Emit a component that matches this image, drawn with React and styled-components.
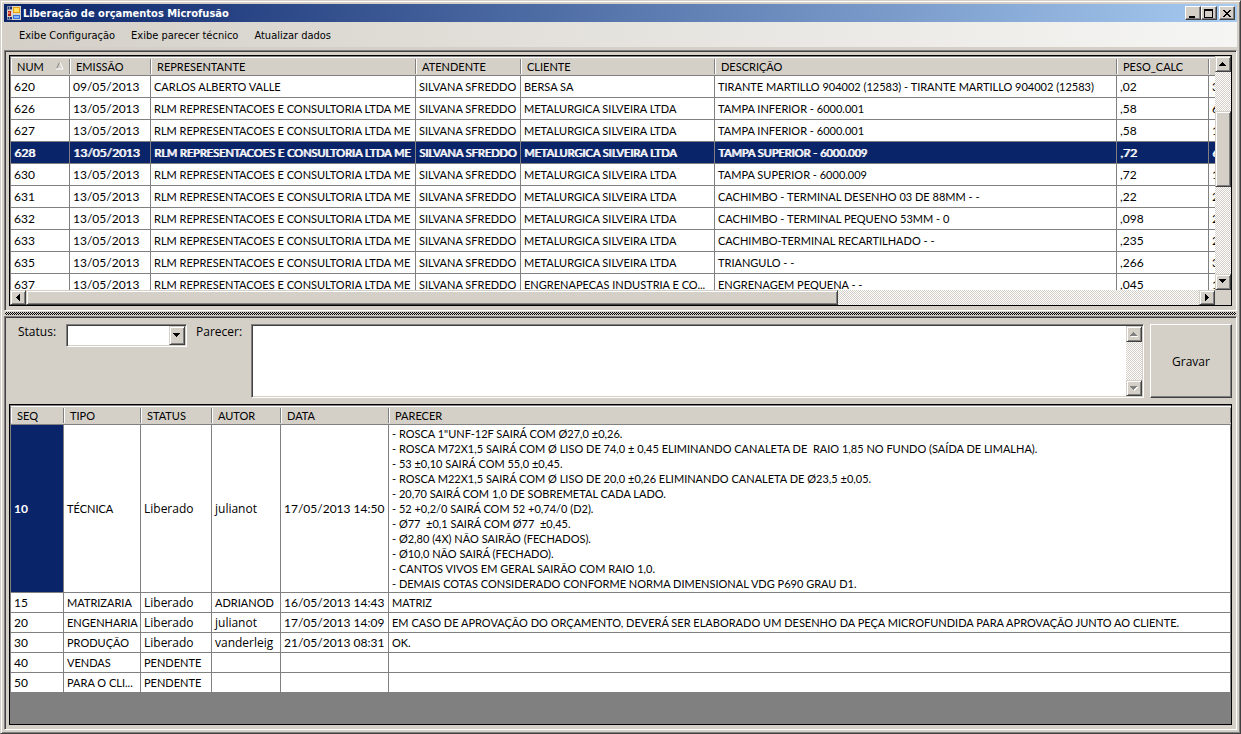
import React from 'react';
import styled, { createGlobalStyle, css } from 'styled-components';

const face = '#d4d0c8';
const line = '#808080';
const dark = '#404040';
const navy = '#0a246a';
const systemFont = '11px/15px "DejaVu Sans Condensed", "Noto Sans", sans-serif';
const formFont = '"Open Sans", "Noto Sans", sans-serif';

const GlobalStyle = createGlobalStyle`
  *, *::before, *::after { box-sizing: border-box; }
  body {
    margin: 0;
    background: ${face};
    color: #000;
    font: 11px/15px Lato, "Open Sans", sans-serif;
  }
  button, select, textarea { font: inherit; color: inherit; margin: 0; padding: 0; border-radius: 0; }
`;

const raised = css`
  background: ${face};
  border: 1px solid;
  border-color: ${face} ${dark} ${dark} ${face};
  box-shadow: inset 1px 1px #fff, inset -1px -1px ${line};
`;

const checker = css`
  background: repeating-conic-gradient(#fff 0 25%, ${face} 0 50%) 0 0 / 2px 2px;
`;

const Window = styled.div`
  display: flex;
  flex-direction: column;
  min-height: 100vh;
  padding: 3px;
  ${raised}
`;

const TitleBar = styled.header`
  display: flex;
  align-items: center;
  height: 18px;
  padding: 0 2px 0 3px;
  background: linear-gradient(90deg, ${navy}, #a6caf0);
`;

const Title = styled.h1`
  flex: 1;
  margin: 0 0 0 2px;
  color: #fff;
  font: ${systemFont};
  font-weight: bold;
`;

const CaptionButton = styled.button`
  display: grid;
  place-items: center;
  width: 16px;
  height: 14px;
  margin-left: ${(p) => (p.$apart ? '2px' : '0')};
  background: ${face};
  border: 1px solid;
  border-color: #fff ${dark} ${dark} #fff;
  box-shadow: inset -1px -1px ${line};
`;

const MenuBar = styled.nav`
  display: flex;
  align-items: center;
  gap: 16px;
  height: 25px;
  padding: 2px 15px 0;
  background: linear-gradient(90deg, ${face}, #f5f5f3);
`;

const MenuItem = styled.button`
  border: 0;
  background: none;
  font: ${systemFont};
`;

const Pane = styled.section`
  display: flex;
  flex-direction: column;
  flex: ${(p) => (p.$grow ? '1' : 'none')};
  padding: ${(p) => (p.$grow ? '7px 3px 4px' : '4px 3px')};
  border: 1px solid;
  border-color: ${line} #fff #fff ${line};
  box-shadow: inset 1px 1px ${dark};
`;

const UpperPane = styled(Pane)`
  margin-top: 3px;
`;

const Splitter = styled.div`
  height: 3px;
  margin: 1px;
  background: repeating-conic-gradient(#000 0 25%, ${face} 0 50%) 0 0 / 2px 2px;
`;

const Frame = styled.div`
  display: flex;
  flex-direction: column;
  flex: 1;
  margin: 0 1px;
  border: 1px solid #000;
  background: ${line};
`;

const Body = styled.div`
  display: flex;
`;

const Viewport = styled.div`
  flex: 1;
  min-width: 0;
  height: 234px;
  overflow: hidden;
`;

const Table = styled.table`
  width: 100%;
  min-width: ${(p) => (p.$wide ? '1280px' : '0')};
  table-layout: fixed;
  border-collapse: separate;
  border-spacing: 0;
  border-left: 1px solid ${line};
  border-top: 1px solid ${line};
`;

const HeadCell = styled.th`
  height: 19px;
  padding: 0 0 0 6px;
  background:
    linear-gradient(${line}, ${line}) right 2px / 1px 15px no-repeat,
    linear-gradient(#fff, #fff) left 2px / 1px 15px no-repeat,
    ${face};
  border-bottom: 1px solid ${line};
  box-shadow: inset 0 1px #fff;
  font-weight: normal;
  text-align: left;
  white-space: nowrap;
`;

const HeadLabel = styled.span`
  display: flex;
  align-items: center;
  justify-content: space-between;
  padding-right: 6px;
`;

const Row = styled.tr`
  height: ${(p) => p.$height};
  background: ${(p) => (p.$selected ? navy : '#fff')};
  color: ${(p) => (p.$selected ? '#fff' : '#000')};
  text-shadow: ${(p) => (p.$selected ? '1px 0 currentColor' : 'none')};
`;

const Cell = styled.td`
  padding: 1px 0 1px 3px;
  border-right: 1px solid ${line};
  border-bottom: 1px solid ${line};
  overflow: hidden;
  text-overflow: ellipsis;
  white-space: pre;
  font-size: ${(p) => (p.$figures ? '12px' : '11px')};
  ${(p) => p.$lower && css`font-family: ${formFont};`}
  ${(p) => p.$selected && css`
    background: ${navy};
    color: #fff;
    font-weight: bold;
  `}
`;

const Bar = styled.div`
  display: flex;
  flex-direction: ${(p) => (p.$vertical ? 'column' : 'row')};
  flex: ${(p) => (p.$vertical ? 'none' : '1')};
  width: ${(p) => (p.$vertical ? '16px' : 'auto')};
  ${checker}
`;

const ArrowButton = styled.button`
  display: grid;
  place-items: center;
  flex: none;
  width: 16px;
  height: 16px;
  ${raised}
`;

const Thumb = styled.div`
  flex: ${(p) => p.$share};
  ${raised}
`;

const Space = styled.div`
  flex: ${(p) => p.$share};
`;

const BottomBar = styled.div`
  display: flex;
  height: 15px;
  background: ${face};

  button { height: 15px; }
`;

const Corner = styled.div`
  width: 16px;
`;

const Form = styled.form`
  display: flex;
  align-items: flex-start;
  margin: 0 1px 6px 10px;
  font-family: ${formFont};
  font-size: 12px;
`;

const Label = styled.label`
  width: ${(p) => p.$width};
`;

const sunken = css`
  background: #fff;
  border: 1px solid;
  border-color: ${line} #fff #fff ${line};
  box-shadow: inset 1px 1px ${dark}, inset -1px -1px ${face};
`;

const Combo = styled.div`
  display: flex;
  width: 121px;
  height: 23px;
  margin-right: 9px;
  padding: 1px;
  ${sunken}
`;

const Select = styled.select`
  grid-area: 1 / 1;
  width: 100%;
  height: 100%;
  appearance: none;
  border: 0;
  background: transparent;
`;

const ComboArrow = styled.span`
  display: grid;
  place-items: center;
  grid-area: 1 / 1;
  justify-self: end;
  width: 16px;
  height: 100%;
  pointer-events: none;
  ${raised}
`;

const ComboInner = styled.div`
  display: grid;
  flex: 1;
`;

const Memo = styled.div`
  display: flex;
  flex: 1;
  height: 74px;
  margin-right: 6px;
  padding: 1px;
  ${sunken}
`;

const TextArea = styled.textarea`
  flex: 1;
  min-width: 0;
  margin: 1px;
  border: 0;
  outline: 0;
  resize: none;
  background: transparent;
`;

const SaveButton = styled.button`
  width: 82px;
  height: 74px;
  background: ${face};
  border: 1px solid;
  border-color: #fff ${dark} ${dark} #fff;
  box-shadow: inset -1px -1px ${line};
`;

const arrows = {
  up: 'M3 0h1v1h1v1h1v1h1v1H0V3h1V2h1V1h1z',
  down: 'M0 0h7v1H6v1H5v1H4v1H3V3H2V2H1V1H0z',
  left: 'M3 0h1v7H3V6H2V5H1V4H0V3h1V2h1V1h1z',
  right: 'M0 0h1v1h1v1h1v1h1v1H3v1H2v1H1v1H0z',
};

function Arrow({ dir, disabled }) {
  const tall = dir === 'left' || dir === 'right';
  return (
    <svg width={tall ? 5 : 8} height={tall ? 8 : 5} shapeRendering="crispEdges" aria-hidden="true">
      {disabled && <path d={arrows[dir]} fill="#fff" transform="translate(1 1)" />}
      <path d={arrows[dir]} fill={disabled ? line : '#000'} />
    </svg>
  );
}

function AppIcon() {
  return (
    <svg width="14" height="14" shapeRendering="crispEdges" aria-hidden="true">
      <path fill="#d8d4cc" d="M0 4h5v7H0zM5 0h9v14H5z" />
      <path fill="#8890a8" d="M0 0h5v4H0zM0 11h5v3H0z" />
      <path fill="#18307c" d="M1 1h1v2H1zM3 1h2v2H3zM1 11h1v2H1zM3 11h2v2H3z" />
      <path fill="#b82418" d="M1 5h3v5H1z" />
      <path fill="#f07050" d="M1 6h2v2H1z" />
      <path fill="#e8a010" d="M6 1h7v6H6z" />
      <path fill="#ffe060" d="M7 2h5v4H7z" />
      <path fill="#3870d8" d="M6 9h7v4H6z" />
      <path fill="#80b4ff" d="M7 10h5v2H7z" />
    </svg>
  );
}

const rlm = 'RLM REPRESENTACOES E CONSULTORIA LTDA ME';
const silveira = 'METALURGICA SILVEIRA LTDA';
const quotes = [
  ['620', '09/05/2013', 'CARLOS ALBERTO VALLE', 'BERSA SA', 'TIRANTE MARTILLO 904002 (12583) - TIRANTE MARTILLO 904002 (12583)', ',02', '3'],
  ['626', '13/05/2013', rlm, silveira, 'TAMPA INFERIOR - 6000.001', ',58', '6'],
  ['627', '13/05/2013', rlm, silveira, 'TAMPA INFERIOR - 6000.001', ',58', '1'],
  ['628', '13/05/2013', rlm, silveira, 'TAMPA SUPERIOR - 6000.009', ',72', '6'],
  ['630', '13/05/2013', rlm, silveira, 'TAMPA SUPERIOR - 6000.009', ',72', '1'],
  ['631', '13/05/2013', rlm, silveira, 'CACHIMBO - TERMINAL DESENHO 03 DE 88MM - -', ',22', '2'],
  ['632', '13/05/2013', rlm, silveira, 'CACHIMBO - TERMINAL PEQUENO 53MM - 0', ',098', '2'],
  ['633', '13/05/2013', rlm, silveira, 'CACHIMBO-TERMINAL RECARTILHADO - -', ',235', '2'],
  ['635', '13/05/2013', rlm, silveira, 'TRIANGULO - -', ',266', '3'],
  ['637', '13/05/2013', rlm, 'ENGRENAPECAS INDUSTRIA E CO...', 'ENGRENAGEM PEQUENA - -', ',045', '1'],
];

const technical = [
  '- ROSCA 1"UNF-12F SAIRÁ COM Ø27,0 ±0,26.',
  '- ROSCA M72X1,5 SAIRÁ COM Ø LISO DE 74,0 ± 0,45 ELIMINANDO CANALETA DE  RAIO 1,85 NO FUNDO (SAÍDA DE LIMALHA).',
  '- 53 ±0,10 SAIRÁ COM 55,0 ±0,45.',
  '- ROSCA M22X1,5 SAIRÁ COM Ø LISO DE 20,0 ±0,26 ELIMINANDO CANALETA DE Ø23,5 ±0,05.',
  '- 20,70 SAIRÁ COM 1,0 DE SOBREMETAL CADA LADO.',
  '- 52 +0,2/0 SAIRÁ COM 52 +0,74/0 (D2).',
  '- Ø77  ±0,1 SAIRÁ COM Ø77  ±0,45.',
  '- Ø2,80 (4X) NÃO SAIRÃO (FECHADOS).',
  '- Ø10,0 NÃO SAIRÁ (FECHADO).',
  '- CANTOS VIVOS EM GERAL SAIRÃO COM RAIO 1,0.',
  '- DEMAIS COTAS CONSIDERADO CONFORME NORMA DIMENSIONAL VDG P690 GRAU D1.',
].join('\n');

const reviews = [
  ['10', 'TÉCNICA', 'Liberado', 'julianot', '17/05/2013 14:50', technical],
  ['15', 'MATRIZARIA', 'Liberado', 'ADRIANOD', '16/05/2013 14:43', 'MATRIZ'],
  ['20', 'ENGENHARIA', 'Liberado', 'julianot', '17/05/2013 14:09', 'EM CASO DE APROVAÇÃO DO ORÇAMENTO, DEVERÁ SER ELABORADO UM DESENHO DA PEÇA MICROFUNDIDA PARA APROVAÇÃO JUNTO AO CLIENTE.'],
  ['30', 'PRODUÇÃO', 'Liberado', 'vanderleig', '21/05/2013 08:31', 'OK.'],
  ['40', 'VENDAS', 'PENDENTE', '', '', ''],
  ['50', 'PARA O CLI...', 'PENDENTE', '', '', ''],
];

const isCaps = (text) => text === text.toUpperCase() && /[A-Z]/.test(text);
const hasLower = (text) => /[a-z]/.test(text);

function Columns({ widths }) {
  return (
    <colgroup>
      {widths.map((width, i) => <col key={i} width={width} />)}
      <col />
    </colgroup>
  );
}

function QuotesTable() {
  return (
    <Table $wide>
      <Columns widths={[59, 81, 265, 105, 194, 402, 92]} />
      <thead>
        <tr>
          <HeadCell>
            <HeadLabel>
              NUM
              <svg width="8" height="8" aria-hidden="true">
                <path d="M3.5 .5L.5 6.5" stroke={line} fill="none" />
                <path d="M4 .5l3 6.5H0" stroke="#fff" fill="none" />
              </svg>
            </HeadLabel>
          </HeadCell>
          {['EMISSÃO', 'REPRESENTANTE', 'ATENDENTE', 'CLIENTE', 'DESCRIÇÃO', 'PESO_CALC', ''].map((name) => (
            <HeadCell key={name}>{name}</HeadCell>
          ))}
        </tr>
      </thead>
      <tbody>
        {quotes.map(([num, date, agent, client, description, weight, next]) => (
          <Row key={num} $height="22px" $selected={num === '628'}>
            <Cell $figures>{num}</Cell>
            <Cell $figures>{date}</Cell>
            <Cell>{agent}</Cell>
            <Cell>SILVANA SFREDDO</Cell>
            <Cell>{client}</Cell>
            <Cell>{description}</Cell>
            <Cell $figures>{weight}</Cell>
            <Cell $figures>{next}</Cell>
          </Row>
        ))}
      </tbody>
    </Table>
  );
}

function ReviewsTable() {
  return (
    <Table>
      <Columns widths={[53, 77, 71, 69, 108]} />
      <thead>
        <tr>
          {['SEQ', 'TIPO', 'STATUS', 'AUTOR', 'DATA', 'PARECER'].map((name) => (
            <HeadCell key={name}>{name}</HeadCell>
          ))}
        </tr>
      </thead>
      <tbody>
        {reviews.map((row) => (
          <Row key={row[0]} $height="20px">
            {row.map((text, i) => (
              <Cell
                key={i}
                $figures={i < 5 && !isCaps(text)}
                $lower={hasLower(text)}
                $selected={i === 0 && text === '10'}
              >
                {text}
              </Cell>
            ))}
          </Row>
        ))}
      </tbody>
    </Table>
  );
}

export default function App() {
  return (
    <>
      <GlobalStyle />
      <Window>
        <TitleBar>
          <AppIcon />
          <Title>Liberação de orçamentos Microfusão</Title>
          <CaptionButton aria-label="Minimizar">
            <svg width="10" height="9" shapeRendering="crispEdges"><path d="M1 7h6v2H1z" /></svg>
          </CaptionButton>
          <CaptionButton aria-label="Maximizar">
            <svg width="10" height="9" shapeRendering="crispEdges"><path fillRule="evenodd" d="M0 0h9v9H0zM1 2v6h7V2z" /></svg>
          </CaptionButton>
          <CaptionButton aria-label="Fechar" $apart>
            <svg width="8" height="7" shapeRendering="crispEdges">
              <path d="M0 0h2v1h1v1h2V1h1V0h2v1H7v1H6v1H5v1h1v1h1v1h1v1H6V6H5V5H3v1H2v1H0V6h1V5h1V4h1V3H2V2H1V1H0z" />
            </svg>
          </CaptionButton>
        </TitleBar>
        <MenuBar>
          <MenuItem>Exibe Configuração</MenuItem>
          <MenuItem>Exibe parecer técnico</MenuItem>
          <MenuItem>Atualizar dados</MenuItem>
        </MenuBar>
        <UpperPane>
          <Frame>
            <Body>
              <Viewport><QuotesTable /></Viewport>
              <Bar $vertical>
                <ArrowButton aria-label="Rolar para cima"><Arrow dir="up" /></ArrowButton>
                <Space $share={39} />
                <Thumb $share={75} />
                <Space $share={88} />
                <ArrowButton aria-label="Rolar para baixo"><Arrow dir="down" /></ArrowButton>
              </Bar>
            </Body>
            <BottomBar>
              <Bar>
                <ArrowButton aria-label="Rolar para a esquerda"><Arrow dir="left" /></ArrowButton>
                <Thumb $share={811} />
                <Space $share={362} />
                <ArrowButton aria-label="Rolar para a direita"><Arrow dir="right" /></ArrowButton>
              </Bar>
              <Corner />
            </BottomBar>
          </Frame>
        </UpperPane>
        <Splitter />
        <Pane $grow>
          <Form onSubmit={(e) => e.preventDefault()}>
            <Label htmlFor="status" $width="48px">Status:</Label>
            <Combo>
              <ComboInner>
                <Select id="status" defaultValue=""><option value="" /></Select>
                <ComboArrow><Arrow dir="down" /></ComboArrow>
              </ComboInner>
            </Combo>
            <Label htmlFor="parecer" $width="55px">Parecer:</Label>
            <Memo>
              <TextArea id="parecer" />
              <Bar $vertical>
                <ArrowButton type="button" disabled aria-label="Subir texto"><Arrow dir="up" disabled /></ArrowButton>
                <Space $share={1} />
                <ArrowButton type="button" disabled aria-label="Descer texto"><Arrow dir="down" disabled /></ArrowButton>
              </Bar>
            </Memo>
            <SaveButton type="submit">Gravar</SaveButton>
          </Form>
          <Frame>
            <ReviewsTable />
          </Frame>
        </Pane>
      </Window>
    </>
  );
}
